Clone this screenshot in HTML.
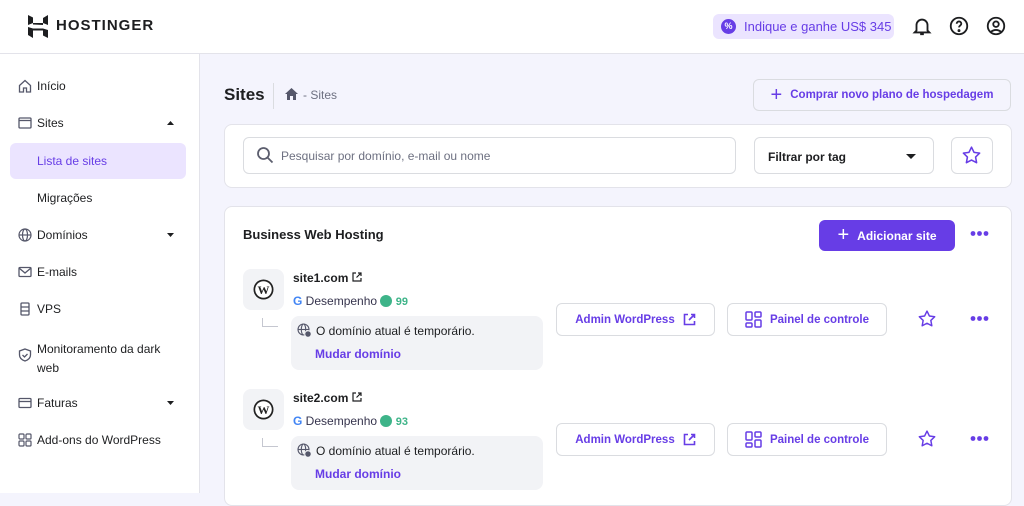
<!DOCTYPE html>
<html><head><meta charset="utf-8"><style>
*{box-sizing:border-box;margin:0;padding:0}
body{width:1024px;height:493px;overflow:hidden;font-family:"Liberation Sans",sans-serif;background:#f4f4fd;position:relative;color:#1d1e20}
.abs{position:absolute}
.hdr{left:0;top:0;width:1024px;height:54px;background:#fff;border-bottom:1px solid #e3e3ea}
.side{left:0;top:54px;width:200px;height:439px;background:#fff;border-right:1px solid #e3e3ea}
.ni{position:absolute;left:37px;font-size:12px;color:#1d1e20}
.ic{position:absolute;left:18px}
.card{background:#fff;border:1px solid #e3e3ea;border-radius:8px}
.btn{position:absolute;background:#fff;border:1px solid #dadce0;border-radius:6px;color:#673de6;font-weight:bold;font-size:11.5px;display:flex;align-items:center;justify-content:center;gap:8px}
</style></head><body>
<div class="abs hdr">
 <svg class="abs" style="left:28px;top:15px" width="20" height="23" viewBox="0 0 20 23"><path d="M0 0l5 2.5v7l10 .5V3l5-3v10l-5-2H5L0 10z M0 12l5 1.5h10L20 15v8l-5-2.5v-5H5v7.5L0 20z" fill="#1d1e20"/></svg>
 <div class="abs" style="left:56px;top:17px;font-size:15px;font-weight:bold;letter-spacing:1px">HOSTINGER</div>
 <div class="abs" style="left:713px;top:14px;width:181px;height:25px;background:#ebe4ff;border-radius:6px;color:#673de6;font-size:13px;display:flex;align-items:center;padding-left:8px;gap:8px"><span style="display:inline-block;width:15px;height:15px;border-radius:50%;background:#673de6;color:#fff;font-size:9px;text-align:center;line-height:15px;font-weight:bold">%</span>Indique e ganhe US$ 345</div>
 <svg class="abs" style="left:911px;top:15px" width="22" height="22" viewBox="0 0 24 24" fill="none" stroke="#1d1e20" stroke-width="2"><path d="M6 17V11a6 6 0 0112 0v6l2 2H4z M10 21h4"/></svg>
 <svg class="abs" style="left:948px;top:15px" width="22" height="22" viewBox="0 0 24 24" fill="none" stroke="#1d1e20" stroke-width="2"><circle cx="12" cy="12" r="9"/><path d="M9.5 9.5a2.5 2.5 0 115 0c0 2-2.5 2-2.5 4"/><circle cx="12" cy="17" r=".6" fill="#1d1e20"/></svg>
 <svg class="abs" style="left:985px;top:15px" width="22" height="22" viewBox="0 0 24 24" fill="none" stroke="#1d1e20" stroke-width="2"><circle cx="12" cy="12" r="9"/><circle cx="12" cy="10" r="3"/><path d="M6.5 18.5c3-3 8-3 11 0"/></svg>
</div>
<div class="abs side">
 <div style="position:absolute;left:10px;top:89px;width:176px;height:36px;background:#ebe4ff;border-radius:6px"></div>
 <svg class="ic" style="top:25px" width="14" height="14" viewBox="0 0 14 14" fill="none" stroke="#55576a" stroke-width="1.3"><path d="M1.5 6.5L7 1.5l5.5 5V13h-4V9h-3v4h-4z"/></svg>
 <div class="ni" style="top:25px">Início</div>
 <svg class="ic" style="top:62px" width="14" height="14" viewBox="0 0 14 14" fill="none" stroke="#55576a" stroke-width="1.3"><rect x="1" y="2" width="12" height="10" rx="1"/><path d="M1 4.5h12"/></svg>
 <div class="ni" style="top:62px">Sites</div>
 <svg class="abs" style="left:167px;top:67px" width="7" height="4"><path d="M0 4L3.5 0 7 4z" fill="#1d1e20"/></svg>
 <div class="ni" style="top:100px;color:#673de6">Lista de sites</div>
 <div class="ni" style="top:137px">Migrações</div>
 <svg class="ic" style="top:174px" width="14" height="14" viewBox="0 0 14 14" fill="none" stroke="#55576a" stroke-width="1.2"><circle cx="7" cy="7" r="6"/><ellipse cx="7" cy="7" rx="2.5" ry="6"/><path d="M1 7h12"/></svg>
 <div class="ni" style="top:174px">Domínios</div>
 <svg class="abs" style="left:167px;top:179px" width="7" height="4"><path d="M0 0L3.5 4 7 0z" fill="#1d1e20"/></svg>
 <svg class="ic" style="top:211px" width="14" height="14" viewBox="0 0 14 14" fill="none" stroke="#55576a" stroke-width="1.3"><rect x="1" y="2.5" width="12" height="9" rx="1"/><path d="M1 3l6 5 6-5"/></svg>
 <div class="ni" style="top:211px">E-mails</div>
 <svg class="ic" style="top:248px" width="14" height="14" viewBox="0 0 14 14" fill="none" stroke="#55576a" stroke-width="1.3"><rect x="3" y="1" width="8" height="12" rx="1"/><path d="M3 5h8M3 9h8"/></svg>
 <div class="ni" style="top:248px">VPS</div>
 <svg class="ic" style="top:294px" width="14" height="14" viewBox="0 0 14 14" fill="none" stroke="#55576a" stroke-width="1.3"><path d="M7 1l5.5 2v4c0 3-2.5 5-5.5 6C4 12 1.5 10 1.5 7V3z"/><path d="M4.5 7l2 2 3-3"/></svg>
 <div class="ni" style="top:286px;line-height:19px">Monitoramento da dark<br>web</div>
 <svg class="ic" style="top:342px" width="14" height="14" viewBox="0 0 14 14" fill="none" stroke="#55576a" stroke-width="1.3"><rect x="1" y="2.5" width="12" height="9" rx="1"/><path d="M1 5.5h12"/></svg>
 <div class="ni" style="top:342px">Faturas</div>
 <svg class="abs" style="left:167px;top:347px" width="7" height="4"><path d="M0 0L3.5 4 7 0z" fill="#1d1e20"/></svg>
 <svg class="ic" style="top:379px" width="14" height="14" viewBox="0 0 14 14" fill="none" stroke="#55576a" stroke-width="1.2"><rect x="1" y="1" width="5" height="5" rx="1"/><rect x="8" y="1" width="5" height="5" rx="1"/><rect x="1" y="8" width="5" height="5" rx="1"/><rect x="8" y="8" width="5" height="5" rx="1"/></svg>
 <div class="ni" style="top:379px">Add-ons do WordPress</div>
</div>
<div class="abs" style="left:224px;top:85px;font-size:17px;font-weight:bold">Sites</div>
<div class="abs" style="left:273px;top:83px;width:1px;height:26px;background:#dadce0"></div>
<svg class="abs" style="left:285px;top:88px" width="13" height="12" viewBox="0 0 13 12"><path d="M6.5 0L13 6h-2v6H8V8H5v4H2V6H0z" fill="#55576a"/></svg>
<div class="abs" style="left:303px;top:88px;font-size:12px;color:#6d7081">- Sites</div>
<div class="btn" style="left:753px;top:79px;width:258px;height:32px;background:transparent"><span style="font-size:20px;font-weight:normal">+</span>Comprar novo plano de hospedagem</div>
<div class="abs card" style="left:224px;top:124px;width:788px;height:64px"></div>
<div class="abs" style="left:243px;top:137px;width:493px;height:37px;border:1px solid #dadce0;border-radius:6px;background:#fff;font-size:12px;color:#6d7081;padding:11px 0 0 37px">Pesquisar por domínio, e-mail ou nome</div>
<svg class="abs" style="left:256px;top:146px" width="18" height="18" viewBox="0 0 18 18" fill="none" stroke="#5c5e6e" stroke-width="1.8"><circle cx="7.5" cy="7.5" r="5.5"/><path d="M11.5 11.5l5 5"/></svg>
<div class="abs" style="left:754px;top:137px;width:180px;height:37px;border:1px solid #dadce0;border-radius:6px;background:#fff;font-size:12px;font-weight:bold;padding:12px 0 0 13px">Filtrar por tag<svg style="position:absolute;right:17px;top:16px" width="10" height="5"><path d="M0 0L5 5 10 0z" fill="#1d1e20"/></svg></div>
<div class="abs" style="left:951px;top:137px;width:42px;height:37px;border:1px solid #dadce0;border-radius:6px;background:#fff"></div>
<svg class="abs" style="left:962px;top:146px" width="19" height="18" viewBox="0 0 24 23" fill="none" stroke="#673de6" stroke-width="2" stroke-linejoin="round"><path d="M12 1.5l3.2 6.6 7.2 1-5.2 5 1.3 7.2L12 17.9l-6.5 3.4 1.3-7.2-5.2-5 7.2-1z"/></svg>
<div class="abs card" style="left:224px;top:206px;width:788px;height:300px"></div>
<div class="abs" style="left:243px;top:227px;font-size:13px;font-weight:bold">Business Web Hosting</div>
<div class="abs" style="left:819px;top:220px;width:136px;height:31px;background:#673de6;border-radius:6px;color:#fff;font-size:12px;font-weight:bold;display:flex;align-items:center;justify-content:center;gap:8px"><span style="font-size:20px;font-weight:normal">+</span>Adicionar site</div>
<svg class="abs" style="left:970px;top:230px" width="19" height="7"><circle cx="3" cy="3.5" r="2.4" fill="#673de6"/><circle cx="9.5" cy="3.5" r="2.4" fill="#673de6"/><circle cx="16" cy="3.5" r="2.4" fill="#673de6"/></svg>

<div id="r1">
<div class="abs" style="left:243px;top:269px;width:41px;height:41px;background:#f2f3f6;border-radius:8px"></div>
<svg class="abs" style="left:253px;top:279px" width="21" height="21" viewBox="0 0 21 21"><circle cx="10.5" cy="10.5" r="10" fill="#222"/><circle cx="10.5" cy="10.5" r="8.3" fill="#fff"/><text x="10.5" y="15" font-size="12" font-weight="bold" text-anchor="middle" font-family="Liberation Serif" fill="#222">W</text></svg>
<div class="abs" style="left:293px;top:271px;font-size:12px;font-weight:bold;white-space:nowrap">site1.com <svg width="10" height="10" viewBox="0 0 10 10" fill="none" stroke="#1d1e20" stroke-width="1.2"><path d="M4 1H1v8h8V6M6 1h3v3M9 1L4.5 5.5"/></svg></div>
<div class="abs" style="left:293px;top:294px;font-size:12px;color:#36344d"><b style="color:#4285f4">G</b> Desempenho <span style="display:inline-block;width:12px;height:12px;border-radius:50%;background:#3eb489;vertical-align:-2px"></span> <b style="color:#3eb489;font-size:11px">99</b></div>
<div class="abs" style="left:262px;top:318px;width:16px;height:9px;border-left:1px solid #c5c7d0;border-bottom:1px solid #c5c7d0"></div>
<div class="abs" style="left:291px;top:316px;width:252px;height:54px;background:#f2f3f6;border-radius:8px"></div>
<svg class="abs" style="left:297px;top:323px" width="15" height="15" viewBox="0 0 15 15" fill="none" stroke="#55576a" stroke-width="1.1"><circle cx="6.5" cy="6.5" r="5.5"/><ellipse cx="6.5" cy="6.5" rx="2.2" ry="5.5"/><path d="M1 6.5h11"/><circle cx="11" cy="11" r="3.3" fill="#55576a" stroke="#f2f3f6"/></svg>
<div class="abs" style="left:316px;top:324px;font-size:12px;color:#1d1e20">O domínio atual é temporário.</div>
<div class="abs" style="left:315px;top:347px;font-size:12px;font-weight:bold;color:#673de6">Mudar domínio</div>
<div class="btn" style="left:556px;top:303px;width:159px;height:33px">Admin WordPress <svg width="13" height="13" viewBox="0 0 13 13" fill="none" stroke="#673de6" stroke-width="1.6"><path d="M5 1.5H1.5v10h10V8M8 1.5h3.5V5M11.5 1.5L6 7"/></svg></div>
<div class="btn" style="left:727px;top:303px;width:160px;height:33px"><svg width="17" height="17" viewBox="0 0 17 17" fill="none" stroke="#673de6" stroke-width="1.5"><rect x="1" y="1" width="6" height="8" rx="1"/><rect x="10" y="1" width="6" height="5" rx="1"/><rect x="1" y="12" width="6" height="4" rx="1"/><rect x="10" y="9" width="6" height="7" rx="1"/></svg>Painel de controle</div>
<svg class="abs" style="left:918px;top:310px" width="18" height="17" viewBox="0 0 24 23" fill="none" stroke="#673de6" stroke-width="2" stroke-linejoin="round"><path d="M12 1.5l3.2 6.6 7.2 1-5.2 5 1.3 7.2L12 17.9l-6.5 3.4 1.3-7.2-5.2-5 7.2-1z"/></svg>
<svg class="abs" style="left:970px;top:315px" width="19" height="7"><circle cx="3" cy="3.5" r="2.4" fill="#673de6"/><circle cx="9.5" cy="3.5" r="2.4" fill="#673de6"/><circle cx="16" cy="3.5" r="2.4" fill="#673de6"/></svg>
</div>
<div id="r2" style="position:absolute;left:0;top:120px;width:1024px">
<div class="abs" style="left:243px;top:269px;width:41px;height:41px;background:#f2f3f6;border-radius:8px"></div>
<svg class="abs" style="left:253px;top:279px" width="21" height="21" viewBox="0 0 21 21"><circle cx="10.5" cy="10.5" r="10" fill="#222"/><circle cx="10.5" cy="10.5" r="8.3" fill="#fff"/><text x="10.5" y="15" font-size="12" font-weight="bold" text-anchor="middle" font-family="Liberation Serif" fill="#222">W</text></svg>
<div class="abs" style="left:293px;top:271px;font-size:12px;font-weight:bold;white-space:nowrap">site2.com <svg width="10" height="10" viewBox="0 0 10 10" fill="none" stroke="#1d1e20" stroke-width="1.2"><path d="M4 1H1v8h8V6M6 1h3v3M9 1L4.5 5.5"/></svg></div>
<div class="abs" style="left:293px;top:294px;font-size:12px;color:#36344d"><b style="color:#4285f4">G</b> Desempenho <span style="display:inline-block;width:12px;height:12px;border-radius:50%;background:#3eb489;vertical-align:-2px"></span> <b style="color:#3eb489;font-size:11px">93</b></div>
<div class="abs" style="left:262px;top:318px;width:16px;height:9px;border-left:1px solid #c5c7d0;border-bottom:1px solid #c5c7d0"></div>
<div class="abs" style="left:291px;top:316px;width:252px;height:54px;background:#f2f3f6;border-radius:8px"></div>
<svg class="abs" style="left:297px;top:323px" width="15" height="15" viewBox="0 0 15 15" fill="none" stroke="#55576a" stroke-width="1.1"><circle cx="6.5" cy="6.5" r="5.5"/><ellipse cx="6.5" cy="6.5" rx="2.2" ry="5.5"/><path d="M1 6.5h11"/><circle cx="11" cy="11" r="3.3" fill="#55576a" stroke="#f2f3f6"/></svg>
<div class="abs" style="left:316px;top:324px;font-size:12px;color:#1d1e20">O domínio atual é temporário.</div>
<div class="abs" style="left:315px;top:347px;font-size:12px;font-weight:bold;color:#673de6">Mudar domínio</div>
<div class="btn" style="left:556px;top:303px;width:159px;height:33px">Admin WordPress <svg width="13" height="13" viewBox="0 0 13 13" fill="none" stroke="#673de6" stroke-width="1.6"><path d="M5 1.5H1.5v10h10V8M8 1.5h3.5V5M11.5 1.5L6 7"/></svg></div>
<div class="btn" style="left:727px;top:303px;width:160px;height:33px"><svg width="17" height="17" viewBox="0 0 17 17" fill="none" stroke="#673de6" stroke-width="1.5"><rect x="1" y="1" width="6" height="8" rx="1"/><rect x="10" y="1" width="6" height="5" rx="1"/><rect x="1" y="12" width="6" height="4" rx="1"/><rect x="10" y="9" width="6" height="7" rx="1"/></svg>Painel de controle</div>
<svg class="abs" style="left:918px;top:310px" width="18" height="17" viewBox="0 0 24 23" fill="none" stroke="#673de6" stroke-width="2" stroke-linejoin="round"><path d="M12 1.5l3.2 6.6 7.2 1-5.2 5 1.3 7.2L12 17.9l-6.5 3.4 1.3-7.2-5.2-5 7.2-1z"/></svg>
<svg class="abs" style="left:970px;top:315px" width="19" height="7"><circle cx="3" cy="3.5" r="2.4" fill="#673de6"/><circle cx="9.5" cy="3.5" r="2.4" fill="#673de6"/><circle cx="16" cy="3.5" r="2.4" fill="#673de6"/></svg>
</div>
</body></html>
